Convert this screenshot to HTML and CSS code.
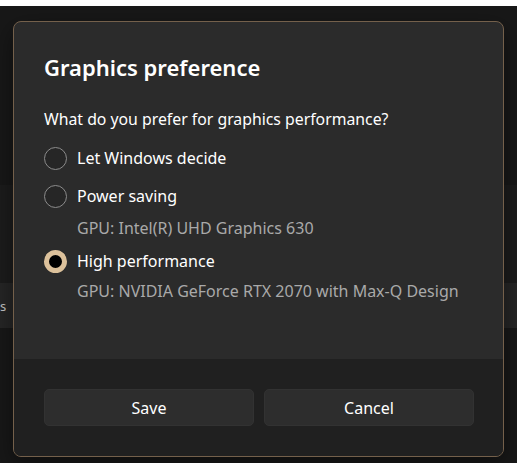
FILE: index.html
```html
<!DOCTYPE html>
<html lang="en">
<head>
<meta charset="utf-8">
<title>Graphics preference</title>
<link rel="stylesheet" href="styles.css">
</head>
<body>
<div class="topbar"></div>
<div class="stage">
  <div class="backdrop">
    <div class="band band-a"></div>
    <div class="band band-b"></div>
    <div class="band band-c"><span class="band-text">s</span></div>
    <div class="band band-d"></div>
  </div>
  <div class="dialog" role="dialog" aria-labelledby="dlg-title">
    <div class="dialog-body">
      <h1 class="title" id="dlg-title">Graphics preference</h1>
      <p class="question">What do you prefer for graphics performance?</p>
      <div class="options">
        <label class="option">
          <span class="radio"></span>
          <span class="option-label">Let Windows decide</span>
        </label>
        <label class="option">
          <span class="radio"></span>
          <span class="option-label">Power saving</span>
        </label>
        <div class="option-sub">GPU: Intel(R) UHD Graphics 630</div>
        <label class="option option-selected">
          <span class="radio radio-on"></span>
          <span class="option-label">High performance</span>
        </label>
        <div class="option-sub option-sub-last">GPU: NVIDIA GeForce RTX 2070 with Max-Q Design</div>
      </div>
    </div>
    <div class="dialog-footer">
      <button class="btn">Save</button>
      <button class="btn">Cancel</button>
    </div>
  </div>
</div>
</body>
</html>
```
FILE: styles.css
```css
* { box-sizing: border-box; }
html, body {
  margin: 0;
  padding: 0;
  background: #171717;
  font-family: "Noto Sans", "Open Sans", "Liberation Sans", sans-serif;
  color: #ffffff;
  width: 517px;
  height: 463px;
  overflow: hidden;
}
.topbar {
  height: 6px;
  background: #ffffff;
}
.stage {
  position: relative;
  height: 457px;
}
.backdrop {
  display: flex;
  flex-direction: column;
  height: 100%;
}
.band-a { height: 179px; background: #181818; }
.band-b { height: 98px; background: #1c1c1c; }
.band-c {
  height: 45px;
  background: #262626;
  display: flex;
  align-items: center;
  overflow: hidden;
}
.band-text {
  margin-left: 0;
  font-size: 13px;
  line-height: 16px;
  color: #c8c8c8;
}
.band-d { flex: 1; background: #181818; }

.dialog {
  position: absolute;
  left: 13px;
  top: 15px;
  width: 491px;
  height: 436px;
  border: 1.5px solid #74604b;
  border-radius: 8px;
  overflow: hidden;
  display: flex;
  flex-direction: column;
  background: #2b2b2b;
  box-shadow: 0 8px 24px rgba(0,0,0,0.45);
}
.dialog-body {
  flex: 1;
  padding: 29px 29px 0 30px;
}
.title {
  margin: 0;
  font-size: 22px;
  font-weight: 600;
  line-height: 32px;
  color: #ffffff;
}
.question {
  margin: 24px 0 0;
  font-size: 15.8px;
  line-height: 24px;
  color: #ffffff;
}
.options {
  margin-top: 8px;
  display: flex;
  flex-direction: column;
}
.option {
  display: flex;
  align-items: center;
  gap: 10px;
  height: 38px;
}
.radio {
  width: 23px;
  height: 23px;
  border-radius: 50%;
  border: 1.5px solid #8c8c8c;
  background: #262626;
  flex: none;
}
.radio-on {
  border: 5.5px solid #dcc19b;
  background: #000000;
}
.option-label {
  font-size: 16px;
  color: #ffffff;
}
.option-sub {
  padding-left: 33px;
  font-size: 16px;
  line-height: 26px;
  color: #a9a9a9;
  margin-bottom: 1px;
}
.option-sub-last {
  margin-top: -2px;
}
.dialog-footer {
  height: 97px;
  background: #202020;
  display: grid;
  grid-template-columns: 1fr 1fr;
  gap: 10px;
  padding: 30px 29px 0 30px;
  align-items: start;
}
.btn {
  height: 37px;
  border: 1px solid #323232;
  border-radius: 5px;
  background: #2d2d2d;
  color: #ffffff;
  font-family: inherit;
  font-size: 16px;
}
```
